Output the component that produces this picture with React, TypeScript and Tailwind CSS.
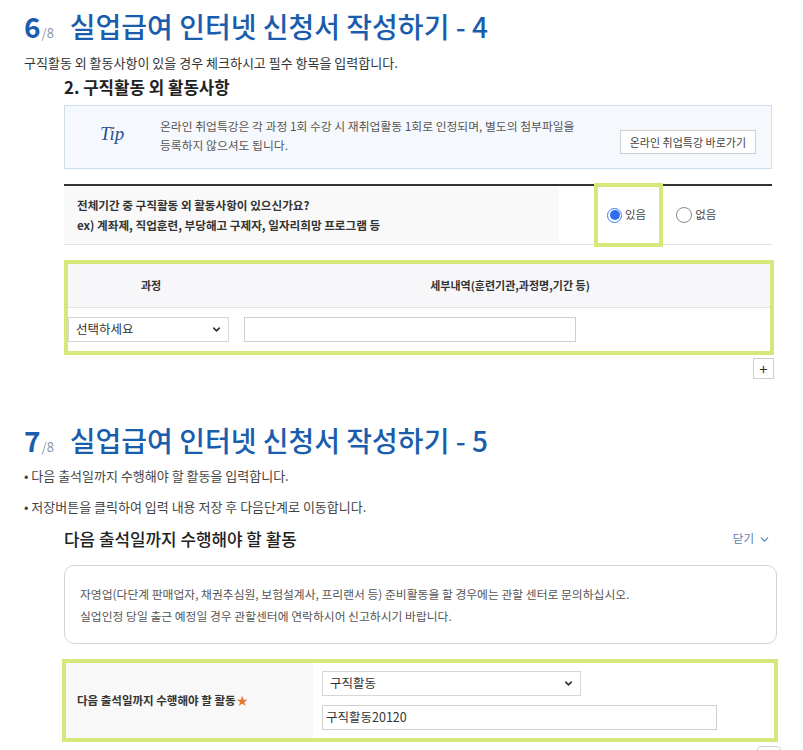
import { ChevronDown } from "lucide-react";

const font = { fontFamily: '"Noto Sans CJK KR", "Noto Sans", sans-serif' };

function StepTitle({ n, title }: { n: number; title: string }) {
  return (
    <div className="flex items-baseline h-[32px] leading-[32px]">
      <span className="text-[28px] font-semibold text-[#1a5dad]">{n}</span>
      <span className="text-[13px] text-[#8a96a8] ml-[1px]">/8</span>
      <span className="text-[28px] font-medium text-[#1a5dad] ml-[16px]">{title}</span>
    </div>
  );
}

function FakeSelect({ label, className }: { label: string; className: string }) {
  return (
    <div className={`flex items-center justify-between border border-[#d6d6d6] bg-white pl-[7px] pr-[6px] text-[12.5px] text-[#333] ${className}`}>
      <span>{label}</span>
      <ChevronDown className="w-[11px] h-[11px] text-[#333]" strokeWidth={3.5} />
    </div>
  );
}

export default function App() {
  return (
    <div className="w-[803px] h-[750px] overflow-hidden bg-white pl-[24px] text-[#333]" style={font}>
      {/* 6단계 */}
      <div className="pt-[10px]">
        <StepTitle n={6} title="실업급여 인터넷 신청서 작성하기 - 4" />
        <p className="mt-[13px] text-[13px] leading-[16px] text-[#333]">
          구직활동 외 활동사항이 있을 경우 체크하시고 필수 항목을 입력합니다.
        </p>
        <div className="ml-[40px] w-[708px]">
          <h3 className="mt-[6px] text-[16.8px] leading-[20px] font-bold text-[#222]">2. 구직활동 외 활동사항</h3>

          {/* Tip */}
          <div className="mt-[8px] h-[64px] flex items-center border border-[#cfdde9] bg-[#f5f9fd] pl-[35px] pr-[15px]">
            <span
              className="text-[19px] italic text-[#2f4f8f] w-[60px] -mt-[6px]"
              style={{ fontFamily: '"Liberation Serif", serif' }}
            >
              Tip
            </span>
            <p className="flex-1 text-[11.8px] leading-[19px] text-[#555] -mt-[4px]">
              온라인 취업특강은 각 과정 1회 수강 시 재취업활동 1회로 인정되며, 별도의 첨부파일을
              <br />
              등록하지 않으셔도 됩니다.
            </p>
            <button className="h-[24px] px-[9px] mt-[10px] border border-[#cfcfcf] bg-white text-[11px] text-[#444]">
              온라인 취업특강 바로가기
            </button>
          </div>

          {/* 질문 행 */}
          <div className="relative mt-[15px] border-t-2 border-[#333] border-b border-b-[#e3e3e3] flex h-[61px]">
            <div className="w-[495px] bg-[#f9f9f9] pl-[13px] flex flex-col justify-center text-[11.6px] leading-[20px] font-bold text-[#333]">
              <span>전체기간 중 구직활동 외 활동사항이 있으신가요?</span>
              <span>ex) 계좌제, 직업훈련, 부당해고 구제자, 일자리희망 프로그램 등</span>
            </div>
            <div className="flex-1 flex items-center pl-[48px] text-[11.5px] text-[#444]">
              <span className="w-[15px] h-[15px] rounded-full border border-[#3b7cf0] bg-white flex items-center justify-center">
                <span className="w-[10px] h-[10px] rounded-full bg-[#2f6ef0]" />
              </span>
              <span className="ml-[3px]">있음</span>
              <span className="ml-[30px] w-[16px] h-[16px] rounded-full border border-[#888] bg-white" />
              <span className="ml-[3px]">없음</span>
            </div>
            <div className="absolute left-[530px] -top-[3px] w-[69px] h-[64px] border-4 border-[#d4e97a]" />
          </div>

          {/* 과정 표 */}
          <div className="mt-[15px] w-[710px] border-4 border-[#d4e97a]">
            <div className="flex h-[44px] bg-[#f7f7f9] border-b border-[#e3e3e3] text-[11px] font-semibold text-[#333]">
              <div className="w-[166px] flex items-center justify-center">과정</div>
              <div className="flex-1 flex items-center justify-center pl-[16px]">세부내역(훈련기관,과정명,기간 등)</div>
            </div>
            <div className="flex items-center h-[43px]">
              <FakeSelect label="선택하세요" className="w-[161px] h-[25px]" />
              <div className="ml-[15px] w-[332px] h-[25px] border border-[#cfcfcf] bg-white" />
            </div>
          </div>
          <div className="flex justify-end mt-[3px] mr-[-2px]">
            <button className="w-[21px] h-[21px] border border-[#cfcfcf] bg-white flex items-center justify-center text-[15px] leading-none text-[#333]">
              +
            </button>
          </div>
        </div>
      </div>

      {/* 7단계 */}
      <div className="mt-[45px]">
        <StepTitle n={7} title="실업급여 인터넷 신청서 작성하기 - 5" />
        <p className="mt-[12px] text-[13px] leading-[16px] text-[#444]">• 다음 출석일까지 수행해야 할 활동을 입력합니다.</p>
        <p className="mt-[15px] text-[13px] leading-[16px] text-[#444]">• 저장버튼을 클릭하여 입력 내용 저장 후 다음단계로 이동합니다.</p>
        <div className="ml-[40px] w-[713px]">
          <div className="mt-[13px] flex items-center justify-between h-[22px]">
            <h3 className="text-[16.9px] font-medium text-[#222]">다음 출석일까지 수행해야 할 활동</h3>
            <span className="flex items-center gap-[4px] text-[11.5px] text-[#5a7db3] mr-[6px]">
              닫기
              <ChevronDown className="w-[13px] h-[13px]" strokeWidth={2} />
            </span>
          </div>

          <div className="mt-[15px] h-[79px] rounded-[10px] border border-[#d4d4d4] pl-[15px] flex flex-col justify-center text-[11.8px] leading-[22px] text-[#555]">
            <span>자영업(다단계 판매업자, 채권추심원, 보험설계사, 프리랜서 등) 준비활동을 할 경우에는 관할 센터로 문의하십시오.</span>
            <span>실업인정 당일 출근 예정일 경우 관할센터에 연락하시어 신고하시기 바랍니다.</span>
          </div>

          <div className="mt-[15px] -ml-[2px] w-[716px] h-[83px] border-4 border-[#d4e97a] flex">
            <div className="w-[247px] bg-[#f8f8f8] pl-[11px] flex items-center text-[11.5px] font-bold text-[#333]">
              다음 출석일까지 수행해야 할 활동<span className="text-[#e8772e] ml-[1px]">★</span>
            </div>
            <div className="flex-1 pl-[9px] pt-[8px] flex flex-col gap-[9px]">
              <FakeSelect label="구직활동" className="w-[259px] h-[25px]" />
              <div className="w-[395px] h-[25px] border border-[#cfcfcf] bg-white pl-[3px] flex items-center text-[12.5px] text-[#333]">
                구직활동20120
              </div>
            </div>
          </div>
          <div className="flex justify-end mt-[4px] -mr-[4px]">
            <div className="w-[24px] h-[21px] rounded-[4px] border border-[#d0d0d0] bg-white" />
          </div>
        </div>
      </div>
    </div>
  );
}
